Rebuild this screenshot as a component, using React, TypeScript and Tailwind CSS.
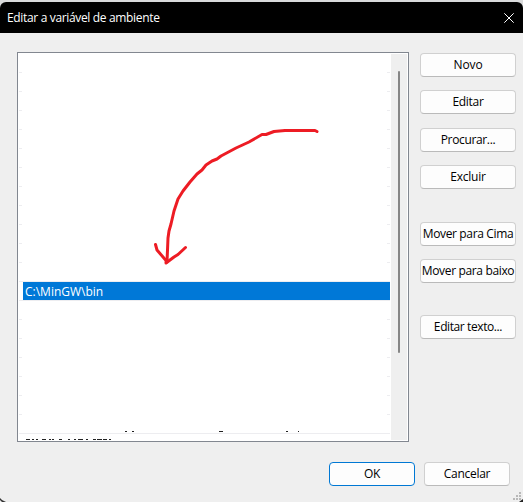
import React from "react";

const ROWS = Array.from({ length: 20 }, (_, i) => 72 + i * 19 - 53);
const FULL = [281 - 53, 300 - 53, 433 - 53];

function Button({ label, text, className = "" }: { label: string; text: string; className?: string }) {
  return (
    <button
      className={`flex h-6 shrink-0 items-center justify-center rounded border bg-[#fdfdfd] text-[12px] leading-4 whitespace-nowrap text-black ${className}`}
    >
      <span className={text}>{label}</span>
    </button>
  );
}

const GRAY = "w-24 border-[#d0d0d0] border-b-[#bababa]";

export default function App() {
  return (
    <div className="h-[502px] w-[523px] overflow-hidden bg-[#d9dadb] pt-0.5 font-['Open_Sans','Noto_Sans',sans-serif]">
      <div className="relative flex h-[500px] flex-col overflow-hidden rounded-t-md bg-[#efefef]">
        <header className="flex h-[31px] shrink-0 items-center justify-between bg-black pr-[9px] pl-[7px] text-white">
          <span className="pt-px text-[12px] leading-4 tracking-[-0.34px]">Editar a variável de ambiente</span>
          <svg width="10" height="10" viewBox="0 0 10 10" stroke="#fff" strokeWidth="1">
            <path d="M.3.3 9.7 9.7M9.7.3.3 9.7" />
          </svg>
        </header>

        <main className="flex pt-[19px] pl-[17px]">
          <div className="relative flex h-[390px] w-[392px] overflow-hidden border border-[#828790] bg-white">
            <svg className="h-[388px] w-[373px] shrink-0" viewBox="0 0 373 388" shapeRendering="crispEdges">
              {ROWS.map((y) => (
                <path key={y} d={FULL.includes(y) ? `M1 ${y + 0.5}H372` : `M1 ${y + 0.5}h3M369 ${y + 0.5}h3`} stroke="#ededf0" />
              ))}
              <path
                d="M107 378.5h2M114 378.5h2M201 378.5h4M268 378.5h2M280 378.5h1M8 386.5h4M14 386.5h2M18 386.5h2M24 386.5h4M31 386.5h2M34 386.5h2M41 386.5h3M50 386.5h2M56 386.5h2M60 386.5h5M68 386.5h2M75 386.5h3M79 386.5h5M85 386.5h4M91 386.5h2"
                stroke="#222"
              />
            </svg>
            <div className="my-px flex w-4 justify-center bg-[#efefef] pt-[17px]">
              <div className="h-[282px] w-0.5 rounded-full bg-[#868686]" />
            </div>
            <div className="absolute top-[229px] left-[5px] flex h-[18px] w-[367px] items-center bg-[#0078d7] pt-0.5 pl-[2px] text-[12px] leading-4 text-white">
              <span>C:\MinGW\bin</span>
            </div>
            <svg className="absolute top-0 left-0" width="373" height="388" viewBox="18 53 373 388" fill="none" stroke="#ed1c24" strokeWidth="3" strokeLinecap="round" strokeLinejoin="round">
              <path d="M317 131.5 315 130.5H285L274 131.5 266 134.5H262L249 142 236 148 221 156 217 159 212 161 206 165 202 170 197 174 190 182 183 191 178 199 174 211 171 224 169 231 168 238 167 262" />
              <path d="M155.500 244.500 157 250 166 260.500V263L174 257 178 254.500 185.500 247.500" />
            </svg>
          </div>

          <aside className="ml-[11px] flex flex-col pt-px">
            <Button label="Novo" text="tracking-[-0.1px]" className={GRAY} />
            <Button label="Editar" text="tracking-[-0.3px]" className={`mt-[13px] ${GRAY}`} />
            <Button label="Procurar..." text="tracking-[-0.35px]" className={`mt-[14px] ${GRAY}`} />
            <Button label="Excluir" text="tracking-[-0.2px]" className={`mt-[13px] ${GRAY}`} />
            <Button label="Mover para Cima" text="tracking-[-0.35px]" className={`mt-[33px] ${GRAY}`} />
            <Button label="Mover para baixo" text="tracking-[-0.35px]" className={`mt-[13px] ${GRAY}`} />
            <Button label="Editar texto..." text="tracking-[-0.4px]" className={`mt-[32px] ${GRAY}`} />
          </aside>
        </main>

        <footer className="flex gap-[9px] pt-5 pl-[329px]">
          <Button label="OK" text="tracking-[-0.3px]" className="w-[86px] border-[#0078d4]" />
          <Button label="Cancelar" text="tracking-[-0.3px]" className="w-[86px] border-[#d0d0d0] border-b-[#bababa]" />
        </footer>

        <svg className="absolute right-0 bottom-0" width="10" height="10" viewBox="0 0 10 10" fill="#b8b8b8">
          <path d="M6 0h2v2h-2zM3 3h2v2h-2zM6 3h2v2h-2zM0 6h2v2h-2zM3 6h2v2h-2zM6 6h2v2h-2z" />
          <path d="M10 7v3H6z" fill="#222" />
        </svg>
        <svg className="absolute bottom-0 left-0" width="6" height="4" viewBox="0 0 6 4" fill="#333">
          <path d="M0 0 2 2 6 4H2L0 2z" />
        </svg>
      </div>
    </div>
  );
}
